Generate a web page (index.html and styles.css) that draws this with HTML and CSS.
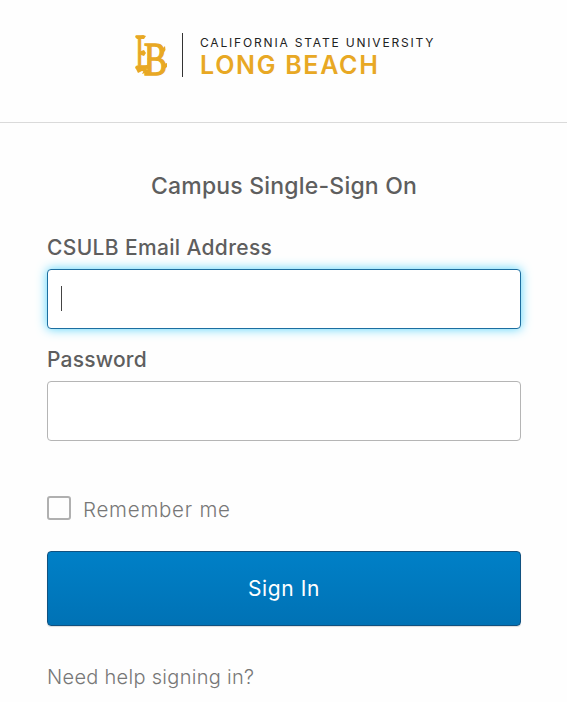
FILE: index.html
```html
<!DOCTYPE html>
<html lang="en">
<head>
    <meta charset="UTF-8">
    <meta name="viewport" content="width=device-width, initial-scale=1.0">
    <title>California State University Long Beach - Sign In</title>
    <link rel="stylesheet" href="styles.css">
</head>
<body>
    <header class="header">
        <svg class="monogram" width="34" height="42" viewBox="0 0 34 42">
            <text class="letter-l" transform="translate(1.5 33) scale(.8 1.5)">L</text>
            <text class="letter-b" transform="translate(10 39.5) scale(1.08 1.48)">B</text>
            <!-- spurs on the letters -->
            <path d="M4 18l3-2 3-1 2 3-2 3-3-1zM13 24l3-2 2 2-2 2zM28 14l3-3 .5 4-2 3zM30 29l3-1v4l-3 2zM1 32l4 1 4-1 4 1-2 4-3-1-4 2zM11 33l3 2v5l-3-2-3 1zM1 1l4 1 4-2 3 1-2 3H3z"/>
        </svg>
        <div class="brand">
            <span class="brand-university">CALIFORNIA STATE UNIVERSITY</span>
            <span class="brand-campus">LONG BEACH</span>
        </div>
    </header>
    <main class="main">
        <h1 class="title">Campus Single-Sign On</h1>
        <form class="form">
            <label class="label label-email" for="email">CSULB Email Address</label>
            <div class="field field-focus">
                <span class="caret"></span>
                <input class="input" type="text" id="email">
            </div>
            <label class="label" for="password">Password</label>
            <div class="field">
                <input class="input" type="password" id="password">
            </div>
            <label class="remember">
                <input class="checkbox" type="checkbox">
                <span class="remember-text">Remember me</span>
            </label>
            <button class="button" type="submit">Sign In</button>
        </form>
        <a class="help" href="#">Need help signing in?</a>
    </main>
</body>
</html>
```
FILE: styles.css
```css
* {
    box-sizing: border-box;
}
body {
    margin: 0;
    background-color: #fefefe;
    color: #5e5e5e;
    font-family: Inter, "Liberation Sans", sans-serif;
}
.header {
    display: flex;
    height: 123px;
    padding: 33px 0 0 134px;
    border-bottom: 1px solid #dadada;
}
.monogram {
    margin-top: 2px;
    overflow: visible;
    fill: #e8a824;
    stroke: #e8a824;
}
.monogram path {
    stroke: none;
}
.letter-l,
.letter-b {
    font: 32px "Liberation Serif", serif;
    stroke-width: 1;
}
.brand {
    display: flex;
    flex-direction: column;
    height: 44px;
    margin-left: 14px;
    padding-left: 17px;
    border-left: 1px solid #333;
    white-space: nowrap;
}
.brand-university {
    margin-top: 2px;
    color: #222;
    font-size: 12px;
    line-height: 16px;
    letter-spacing: 1.82px;
}
.brand-campus {
    color: #e8a824;
    font-size: 25px;
    font-weight: 600;
    line-height: 28px;
    letter-spacing: 1.7px;
}
.main {
    padding: 48px 46px 0 47px;
}
.title {
    margin: 0;
    font-size: 23px;
    font-weight: 450;
    line-height: 30px;
    letter-spacing: .2px;
    text-align: center;
}
.label {
    display: block;
    height: 30px;
    font-size: 21px;
    font-weight: 450;
    line-height: 32px;
    letter-spacing: .2px;
}
.label-email {
    margin-top: 31px;
    line-height: 31px;
    letter-spacing: .35px;
}
.field {
    display: flex;
    align-items: center;
    height: 60px;
    margin: 7px 0 15px;
    padding: 0 14px 0 13px;
    border: 1px solid #b5b5b5;
    border-radius: 4px;
    background-color: #fff;
}
.field-focus {
    border-color: #1c6ea0;
    box-shadow: 0 0 11px #55d4fb;
}
.caret {
    width: 1px;
    height: 25px;
    margin-bottom: 2px;
    background-color: #444;
}
.input {
    flex: 1;
    border: 0;
    outline: 0;
    background: none;
    font: inherit;
}
.remember {
    display: flex;
    align-items: center;
    height: 24px;
    margin-top: 55px;
    color: #777;
    font-size: 20.5px;
    font-weight: 300;
    letter-spacing: .75px;
}
.checkbox {
    appearance: none;
    width: 24px;
    height: 24px;
    margin: 0 12px 0 0;
    border: 2px solid #b0b0b0;
    border-radius: 3px;
}
.remember-text {
    padding-top: 3px;
    line-height: 24px;
}
.button {
    display: block;
    width: 100%;
    height: 75px;
    margin-top: 31px;
    border: 1px solid #105180;
    border-radius: 4px;
    background: linear-gradient(#0080c7, #0072b5);
    box-shadow: 0 1px 1px #ddd;
    color: #fff;
    font: 400 21px Inter, sans-serif;
    letter-spacing: .6px;
}
.help {
    display: inline-block;
    margin-top: 36px;
    color: #777;
    font-size: 20px;
    font-weight: 300;
    line-height: 30px;
    letter-spacing: .3px;
    text-decoration: none;
}
```
